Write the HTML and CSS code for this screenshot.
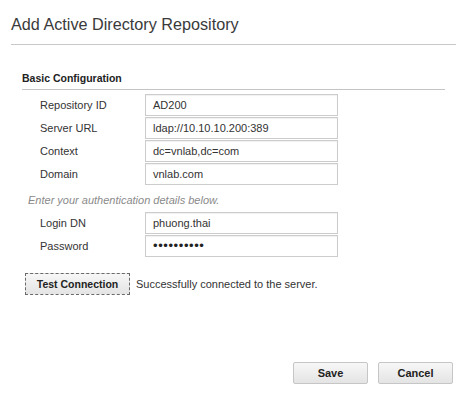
FILE: index.html
```html
<!DOCTYPE html>
<html>
<head>
<meta charset="utf-8">
<link rel="stylesheet" href="styles.css">
</head>
<body>
<div class="dialog">
  <h1 class="title">Add Active Directory Repository</h1>
  <div class="section">
    <h2 class="section-head">Basic Configuration</h2>
    <div class="rows">
      <div class="row"><span class="label">Repository ID</span><div class="field">AD200</div></div>
      <div class="row"><span class="label">Server URL</span><div class="field">ldap://10.10.10.200:389</div></div>
      <div class="row"><span class="label">Context</span><div class="field">dc=vnlab,dc=com</div></div>
      <div class="row"><span class="label">Domain</span><div class="field">vnlab.com</div></div>
    </div>
    <p class="hint">Enter your authentication details below.</p>
    <div class="rows">
      <div class="row"><span class="label">Login DN</span><div class="field">phuong.thai</div></div>
      <div class="row"><span class="label">Password</span><div class="field dots">••••••••••</div></div>
    </div>
    <div class="test">
      <button class="btn btn-test">Test Connection</button>
      <span class="status">Successfully connected to the server.</span>
    </div>
  </div>
  <div class="footer">
    <button class="btn btn-foot">Save</button>
    <button class="btn btn-foot">Cancel</button>
  </div>
</div>
</body>
</html>
```
FILE: styles.css
```css
html, body {
  margin: 0;
  padding: 0;
  background: #ffffff;
}
body {
  font-family: "Liberation Sans", Arial, sans-serif;
  color: #333333;
  width: 468px;
  height: 400px;
  overflow: hidden;
}
.dialog {
  display: flex;
  flex-direction: column;
}
.title {
  margin: 0 12px 0 11px;
  padding: 14px 0 10px;
  font-size: 16.2px;
  line-height: 20px;
  font-weight: normal;
  color: #3a3a3a;
  border-bottom: 1px solid #c8c8c8;
}
.section {
  margin: 26px 23px 0 22px;
}
.section-head {
  margin: 0;
  padding-bottom: 4px;
  font-size: 10.5px;
  line-height: 14px;
  font-weight: bold;
  color: #222;
  border-bottom: 1px solid #c4c4c4;
}
.rows {
  display: flex;
  flex-direction: column;
  gap: 1px;
  margin-top: 4px;
}
.row {
  display: flex;
  align-items: center;
  padding-left: 18px;
  height: 22px;
}
.label {
  width: 105px;
  flex: none;
  font-size: 11px;
  color: #333;
}
.field {
  box-sizing: border-box;
  width: 193px;
  height: 22px;
  border: 1px solid #cccccc;
  box-shadow: inset 0 1px 1px rgba(0,0,0,0.06);
  padding: 0 7px;
  font-size: 11px;
  line-height: 20px;
  color: #333;
  background: #fff;
}
.dots {
  font-size: 13px;
  letter-spacing: 0.6px;
  color: #222;
}
.hint {
  margin: 8px 0 0 6px;
  font-size: 11px;
  line-height: 14px;
  font-style: italic;
  color: #8a8a8a;
}
.rows + .hint + .rows {
  margin-top: 5px;
}
.test {
  display: flex;
  align-items: center;
  gap: 6px;
  margin: 16px 0 0 3px;
}
.btn {
  font-family: "Liberation Sans", Arial, sans-serif;
  color: #222;
  font-weight: bold;
  font-size: 10.5px;
  height: 22px;
  padding: 0;
  background: linear-gradient(#f7f7f7, #e4e4e4);
  border: 1px solid #c6c6c6;
  border-radius: 2px;
  box-sizing: border-box;
}
.btn-test {
  width: 105px;
  border: 1px dashed #6a6a6a;
  border-radius: 0;
}
.status {
  font-size: 11px;
  color: #333;
}
.footer {
  display: flex;
  justify-content: flex-end;
  gap: 10px;
  margin-top: 67px;
  padding-right: 15px;
}
.btn-foot {
  width: 75px;
  height: 22px;
  font-size: 11px;
}
```
